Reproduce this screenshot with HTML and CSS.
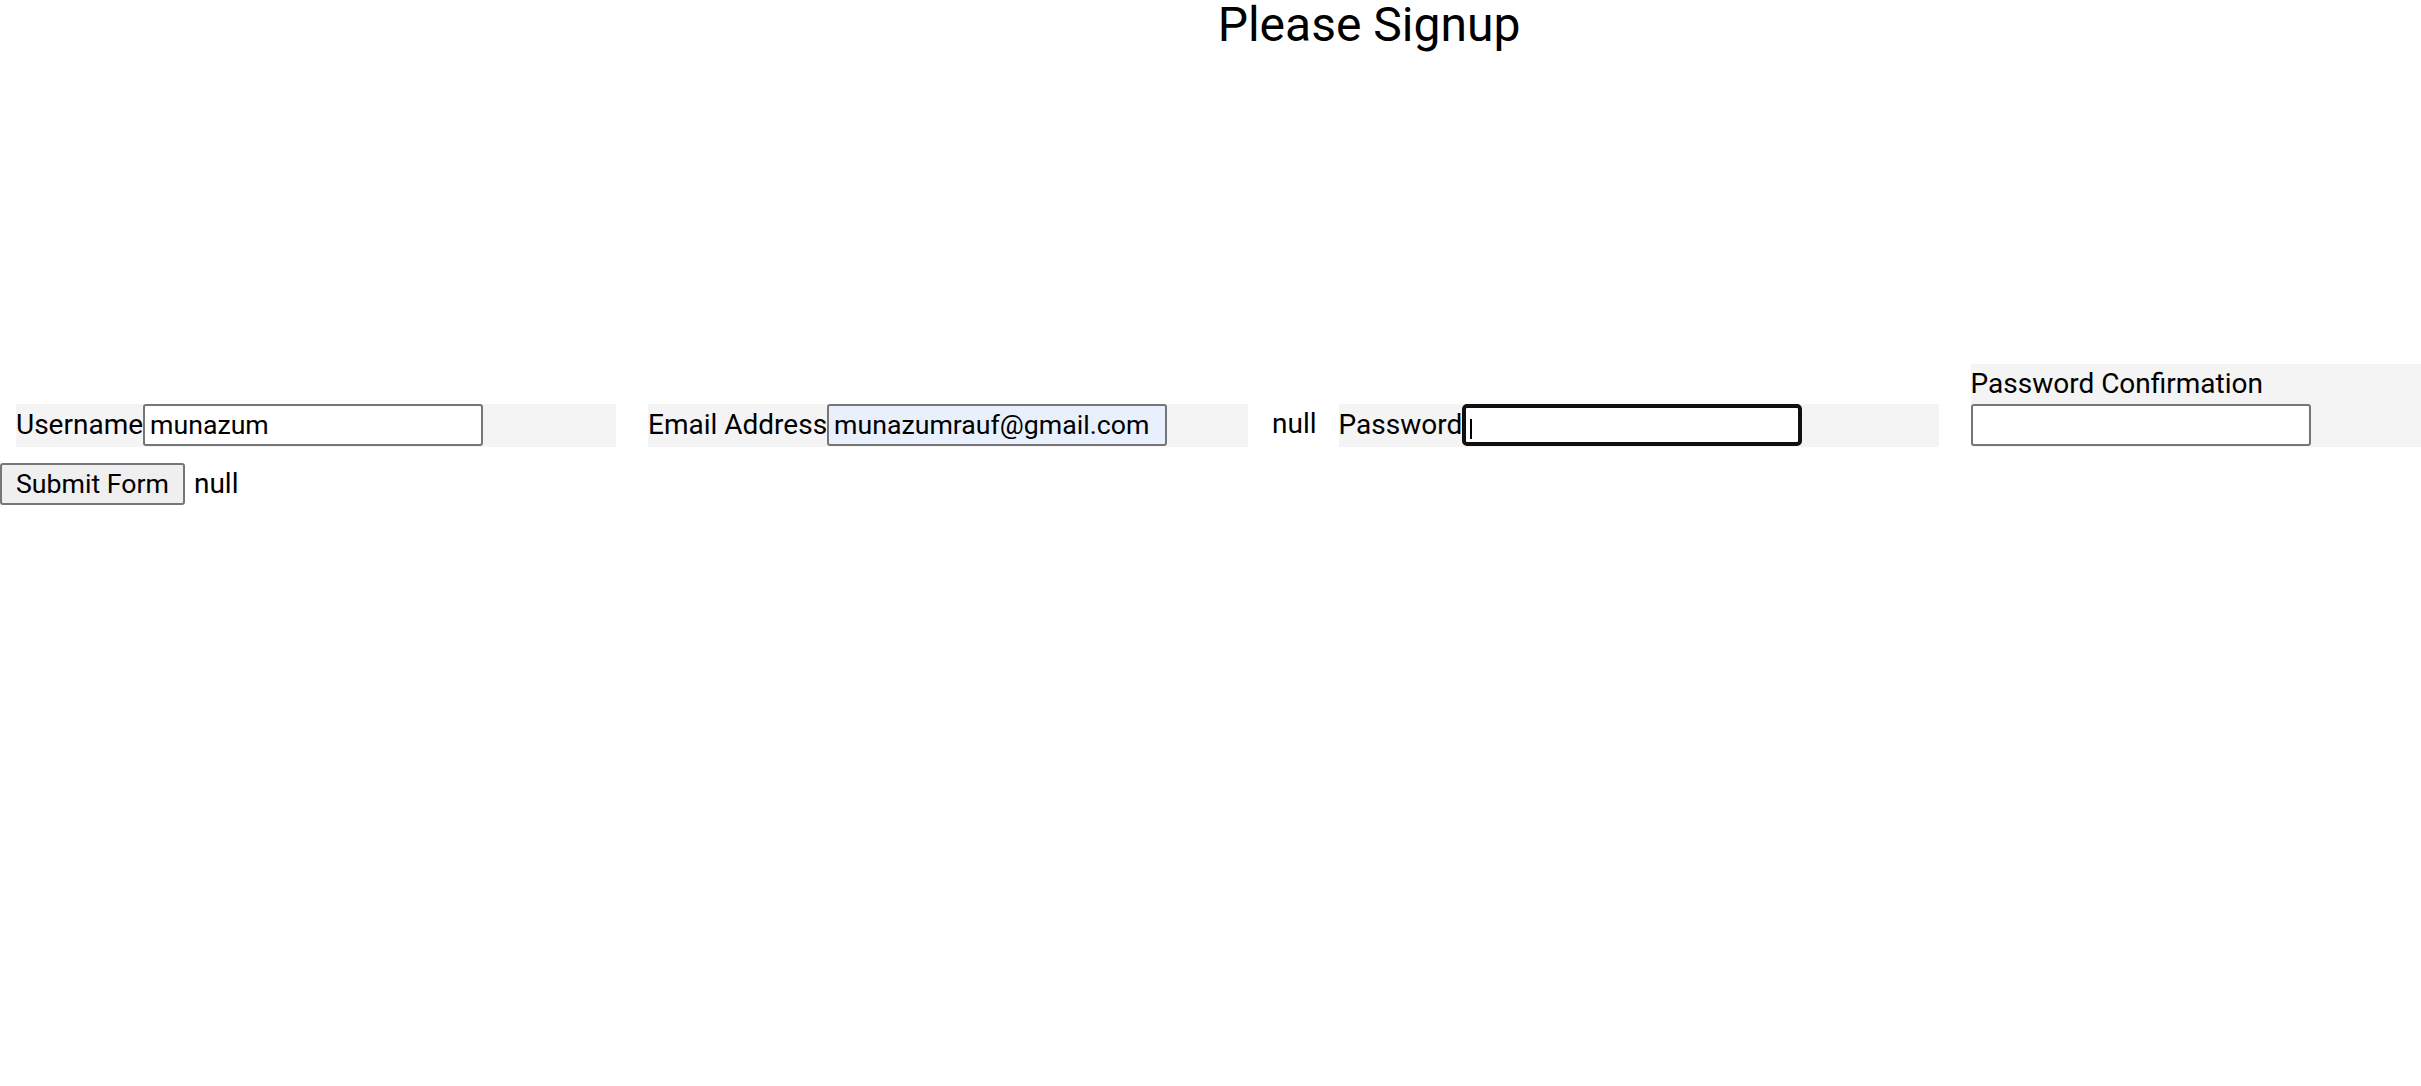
FILE: index.html
```html
<!DOCTYPE html>
<html lang="en">
<head>
<meta charset="utf-8">
<title>Signup</title>
<link rel="stylesheet" href="styles.css">
</head>
<body>
<h1 class="title">Please Signup</h1>
<form class="signup">
  <div class="fields">
    <div class="field"><label>Username</label><input class="text-input" type="text" value="munazum"></div>
    <div class="field"><label>Email Address</label><input class="text-input autofill" type="text" value="munazumrauf@gmail.com"></div>
    <span class="error">null</span>
    <div class="field"><label>Password</label><span class="focus-wrap"><input class="text-input focused" type="password"><span class="caret"></span></span></div>
    <div class="field"><label>Password Confirmation</label><input class="text-input" type="password"></div>
  </div>
  <div class="actions">
    <button type="button" class="submit">Submit Form</button>
    <span class="error-inline">null</span>
  </div>
</form>
</body>
</html>
```
FILE: styles.css
```css
html {
  overflow-x: hidden;
}
body {
  margin: 0;
  font-family: Roboto, "Liberation Sans", sans-serif;
  color: #000;
  background: #fff;
}
.title {
  margin: 0;
  font-size: 48px;
  font-weight: 400;
  line-height: 49px;
  text-align: center;
  padding-left: 317px;
}
.signup {
  padding-top: 315px;
}
.fields {
  display: flex;
  align-items: flex-end;
}
.field {
  flex: 0 0 600px;
  margin: 0 16px;
  background: #f4f4f4;
  font-size: 28px;
  line-height: 40px;
  padding-bottom: 1px;
}
.text-input {
  box-sizing: border-box;
  width: 340px;
  height: 42px;
  border: 2px solid #767676;
  border-radius: 3px;
  padding: 0 5px;
  margin: 0;
  font-family: Roboto, "Liberation Sans", sans-serif;
  font-size: 26.7px;
  color: #000;
  background: #fff;
  vertical-align: baseline;
  outline: none;
}
.autofill {
  background: #e8f0fe;
}
.focused {
  border: 4px solid #101010;
  border-radius: 5px;
}
.focus-wrap {
  position: relative;
  display: inline-block;
}
.caret {
  position: absolute;
  left: 8px;
  top: 15px;
  width: 2px;
  height: 20px;
  background: #000;
}
.error {
  flex: 0 0 auto;
  font-size: 28px;
  line-height: 40px;
  padding: 0 6px 3px 8px;
}
.actions {
  display: flex;
  align-items: baseline;
  margin-top: 16px;
}
.submit {
  box-sizing: border-box;
  height: 42px;
  padding: 0 14px;
  border: 2px solid #767676;
  border-radius: 3px;
  background: #efefef;
  font-family: Roboto, "Liberation Sans", sans-serif;
  font-size: 26.7px;
  color: #000;
  margin: 0;
}
.error-inline {
  font-size: 28px;
  margin-left: 9px;
}
```
